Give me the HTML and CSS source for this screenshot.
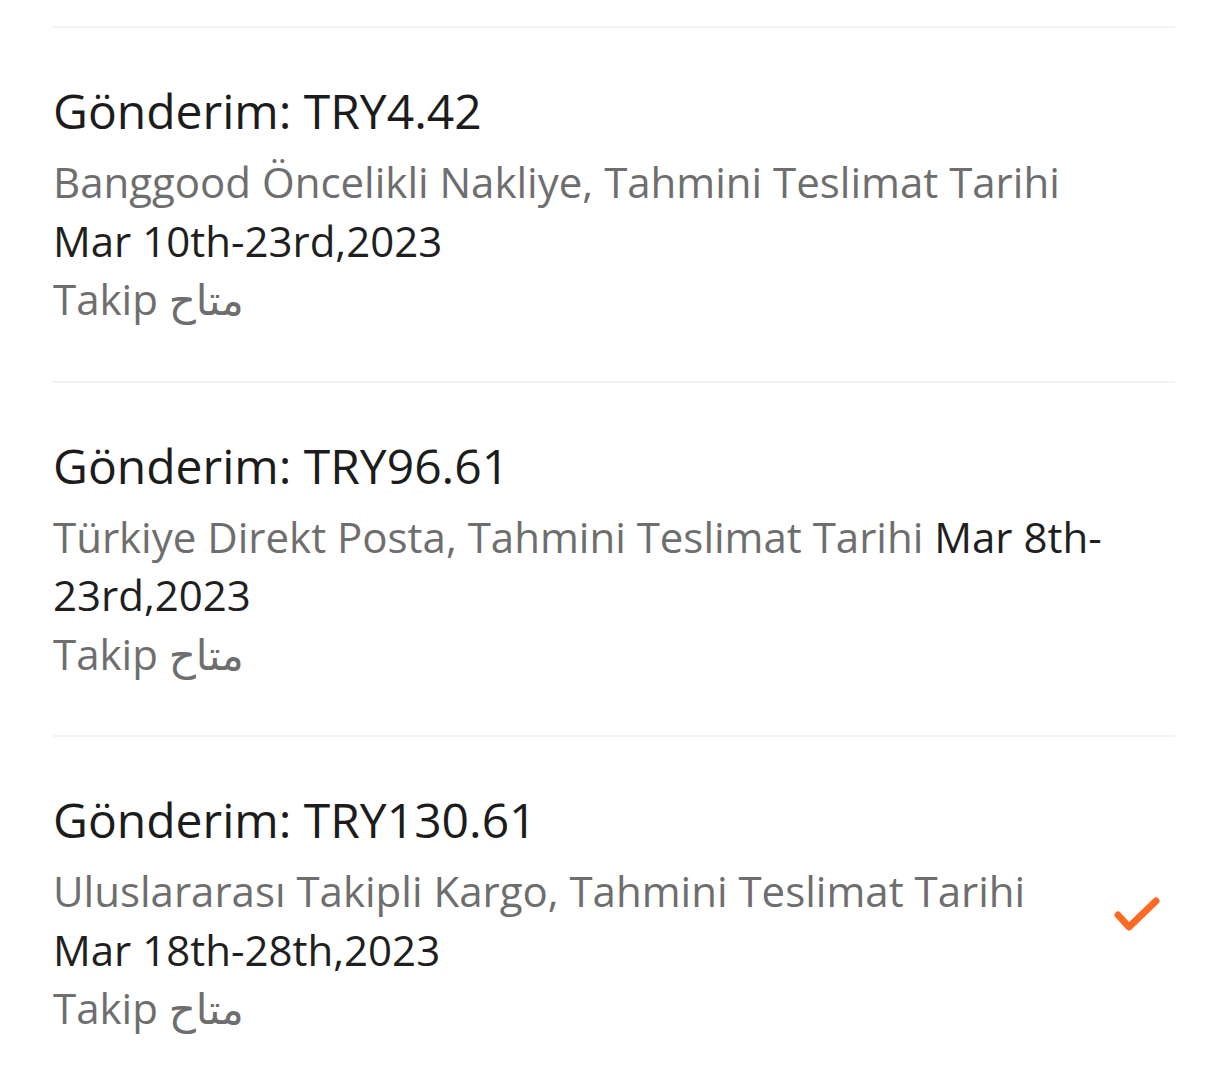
FILE: index.html
```html
<!DOCTYPE html>
<html lang="tr">
<head>
<meta charset="utf-8">
<title>Gönderim</title>
<link rel="stylesheet" href="styles.css">
</head>
<body>
<div class="list">
  <div class="item">
    <div class="info">
      <div class="title">Gönderim: TRY4.42</div>
      <div class="desc"><span class="muted">Banggood Öncelikli Nakliye, Tahmini Teslimat Tarihi</span> <span class="date">Mar 10th-23rd,2023</span></div>
      <div class="desc muted">Takip <span dir="rtl">متاح</span></div>
    </div>
    <div class="mark"></div>
  </div>
  <div class="item">
    <div class="info">
      <div class="title">Gönderim: TRY96.61</div>
      <div class="desc"><span class="muted">Türkiye Direkt Posta, Tahmini Teslimat Tarihi</span> <span class="date">Mar 8th-23rd,2023</span></div>
      <div class="desc muted">Takip <span dir="rtl">متاح</span></div>
    </div>
    <div class="mark"></div>
  </div>
  <div class="item">
    <div class="info">
      <div class="title">Gönderim: TRY130.61</div>
      <div class="desc"><span class="muted">Uluslararası Takipli Kargo, Tahmini Teslimat Tarihi</span> <span class="date">Mar 18th-28th,2023</span></div>
      <div class="desc muted">Takip <span dir="rtl">متاح</span></div>
    </div>
    <div class="mark">
      <svg class="check" width="50" height="40" viewBox="0 0 50 40"><polyline points="6,21 17,33 44,7" fill="none" stroke="#ff6a22" stroke-width="7" stroke-linecap="round" stroke-linejoin="round"/></svg>
    </div>
  </div>
</div>
</body>
</html>
```
FILE: styles.css
```css
html, body {
  margin: 0;
  padding: 0;
  background: #ffffff;
}
body {
  font-family: "Open Sans", "DejaVu Sans", sans-serif;
  color: #1f1f1f;
}
.list {
  padding-top: 26px;
  margin: 0 33px 0 53px;
}
.item {
  display: flex;
  align-items: center;
  border-top: 2px solid #f3f3f3;
  padding: 54px 0 52px;
}
.info {
  width: 1052px;
}
.title {
  font-size: 48px;
  font-weight: 500;
  line-height: 58px;
  margin-bottom: 13px;
  color: #1c1c1c;
}
.desc {
  font-size: 42px;
  line-height: 58.5px;
}
.muted {
  color: #6e6e6e;
}
.date {
  color: #1f1f1f;
}
.mark {
  flex: 1;
  display: flex;
  align-items: center;
  padding-left: 7px;
}
.check {
  display: block;
}
```
